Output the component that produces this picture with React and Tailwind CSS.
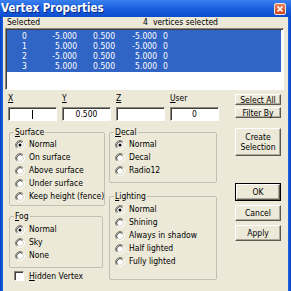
import React from 'react';

const font = { fontFamily: '"DejaVu Sans Condensed", "DejaVu Sans", sans-serif', fontStretch: 'condensed' };

const rows = [
    ['0', '-5.000', '0.500', '-5.000', '0'],
    ['1', '5.000', '0.500', '-5.000', '0'],
    ['2', '-5.000', '0.500', '5.000', '0'],
    ['3', '5.000', '0.500', '5.000', '0'],
];

const Radio = ({ checked }) => (
    <svg width="10" height="10" viewBox="0 0 10 10" className="shrink-0">
        <circle cx="5" cy="5" r="3.5" fill="#fff" />
        <path d="M8.18 1.82 A4.5 4.5 0 0 0 1.82 8.18" stroke="#8a877a" fill="none" />
        <path d="M1.82 8.18 A4.5 4.5 0 0 0 8.18 1.82" stroke="#fff" fill="none" />
        <path d="M7.47 2.53 A3.5 3.5 0 0 0 2.53 7.47" stroke="#404040" fill="none" />
        <path d="M2.53 7.47 A3.5 3.5 0 0 0 7.47 2.53" stroke="#d8d5c6" fill="none" />
        {checked && <circle cx="5" cy="5" r="1.5" fill="#000" />}
    </svg>
);

const Option = ({ label, checked }) => (
    <div className="h-[13px] flex items-center pl-[5px]">
        <Radio checked={checked} />
        <span className="ml-[4px] whitespace-nowrap">{label}</span>
    </div>
);

const Group = ({ mnemonic, rest, children, className }) => (
    <fieldset className={`border border-[#c3c0b1] rounded-[2px] ${className}`}>
        <legend className="ml-[4px] px-[1px] leading-[11px] h-[11px]">
            <u className="underline-offset-1">{mnemonic}</u>{rest}
        </legend>
        {children}
    </fieldset>
);

const Button = ({ children, className = '' }) => (
    <div className={`flex items-center justify-center text-center leading-[10px] bg-[#ece9d8] border border-t-white border-l-white border-r-[#5a5850] border-b-[#5a5850] shadow-[inset_-1px_-1px_0_#aca899] ${className}`}>
        {children}
    </div>
);

const Field = ({ value, cursor }) => (
    <div className="h-[14px] bg-white border border-t-[#8a877a] border-l-[#8a877a] border-r-white border-b-white shadow-[inset_1px_1px_0_#404040] flex items-center justify-center">
        {cursor ? <span className="w-[1px] h-[9px] bg-black" /> : value}
    </div>
);

export default function App() {
    return (
        <div className="w-[291px] h-[291px] overflow-hidden flex flex-col text-[8.5px] text-black" style={font}>
            {/* Title bar */}
            <div className="h-[17px] shrink-0 flex items-center pl-[1px] pr-[5px] bg-gradient-to-b from-[#3a80f0] via-[#1a5fe0] to-[#0c4ccc]">
                <span className="text-white font-bold text-[11.5px] leading-[13px]" style={{ fontFamily: '"DejaVu Sans", sans-serif', textShadow: '1px 1px 0 #0a2a80' }}>
                    Vertex Properties
                </span>
                <div className="ml-auto w-[12px] h-[12px] rounded-[2px] border border-[#f5e0d8] bg-gradient-to-b from-[#e8865f] to-[#c9461f] flex items-center justify-center">
                    <svg width="8" height="8" viewBox="0 0 8 8">
                        <path d="M1.5 1.5 L6.5 6.5 M6.5 1.5 L1.5 6.5" stroke="#fff" strokeWidth="1.6" />
                    </svg>
                </div>
            </div>

            <div className="flex-1 flex min-h-0">
                <div className="w-[3px] bg-gradient-to-r from-[#0a3fc0] to-[#1c63e6]" />

                <div className="flex-1 bg-[#ece9d8] flex flex-col">
                    {/* Header */}
                    <div className="h-[11px] leading-[11px] flex pl-[4px]">
                        <span className="w-[136px]">Selected</span>
                        <span>4</span>
                        <span className="ml-[5px]">vertices selected</span>
                    </div>

                    {/* List */}
                    <div className="ml-[2px] w-[279px] h-[62px] bg-white border border-t-[#8a877a] border-l-[#8a877a] border-r-white border-b-white shadow-[inset_1px_1px_0_#404040] pt-[1px] pl-[1px] pr-[2px]">
                        <div className="bg-[#3165c5] text-white py-[1px]">
                            {rows.map((r) => (
                                <div key={r[0]} className="h-[10px] leading-[10px] flex">
                                    <span className="w-[24px] pl-[15px]">{r[0]}</span>
                                    <span className="w-[46px] text-right">{r[1]}</span>
                                    <span className="w-[38px] text-right">{r[2]}</span>
                                    <span className="w-[42px] text-right">{r[3]}</span>
                                    <span className="pl-[6px]">{r[4]}</span>
                                </div>
                            ))}
                        </div>
                    </div>

                    <div className="flex">
                        {/* Left section */}
                        <div className="w-[232px] flex flex-col">
                            <div className="mt-[3px] h-[10px] leading-[10px] grid grid-cols-[49px_49px_49px_49px] gap-x-[5px] pl-[5px]">
                                <u className="underline-offset-1">X</u>
                                <u className="underline-offset-1">Y</u>
                                <u className="underline-offset-1">Z</u>
                                <span><u className="underline-offset-1">U</u>ser</span>
                            </div>
                            <div className="mt-[4px] grid grid-cols-[49px_49px_49px_49px] gap-x-[5px] pl-[5px]">
                                <Field cursor />
                                <Field value="0.500" />
                                <Field value="" />
                                <Field value="0" />
                            </div>

                            <div className="flex mt-[6px]">
                                <div className="ml-[6px] w-[94px] flex flex-col">
                                    <Group mnemonic="S" rest="urface" className="pb-[2px]">
                                        <Option label="Normal" checked />
                                        <Option label="On surface" />
                                        <Option label="Above surface" />
                                        <Option label="Under surface" />
                                        <Option label="Keep height (fence)" />
                                    </Group>
                                    <Group mnemonic="F" rest="og" className="mt-[5px] pt-[1px] pb-[5px]">
                                        <Option label="Normal" checked />
                                        <Option label="Sky" />
                                        <Option label="None" />
                                    </Group>
                                    <div className="mt-[2px] h-[12px] flex items-center pl-[5px]">
                                        <div className="w-[10px] h-[10px] bg-white border border-t-[#8a877a] border-l-[#8a877a] border-r-white border-b-white shadow-[inset_1px_1px_0_#404040]" />
                                        <span className="ml-[5px]"><u className="underline-offset-1">H</u>idden Vertex</span>
                                    </div>
                                </div>

                                <div className="ml-[6px] w-[108px] flex flex-col">
                                    <Group mnemonic="D" rest="ecal" className="pb-[5px]">
                                        <Option label="Normal" checked />
                                        <Option label="Decal" />
                                        <Option label="Radio12" />
                                    </Group>
                                    <Group mnemonic="L" rest="ighting" className="mt-[8px] pt-[1px] pb-[11px]">
                                        <Option label="Normal" checked />
                                        <Option label="Shining" />
                                        <Option label="Always in shadow" />
                                        <Option label="Half lighted" />
                                        <Option label="Fully lighted" />
                                    </Group>
                                </div>
                            </div>
                        </div>

                        {/* Buttons */}
                        <div className="w-[46px] flex flex-col">
                            <Button className="mt-[4px] h-[11px]">Select All</Button>
                            <Button className="mt-[2px] h-[11px]">Filter By</Button>
                            <Button className="mt-[10px] h-[28px]">Create<br />Selection</Button>
                            <div className="mt-[27px] h-[18px] border border-black flex">
                                <Button className="flex-1">OK</Button>
                            </div>
                            <Button className="mt-[4px] h-[16px]">Cancel</Button>
                            <Button className="mt-[4px] h-[16px]">Apply</Button>
                        </div>
                    </div>
                </div>

                <div className="w-[3px] bg-gradient-to-r from-[#1c63e6] to-[#0a3fc0]" />
            </div>
        </div>
    );
}
